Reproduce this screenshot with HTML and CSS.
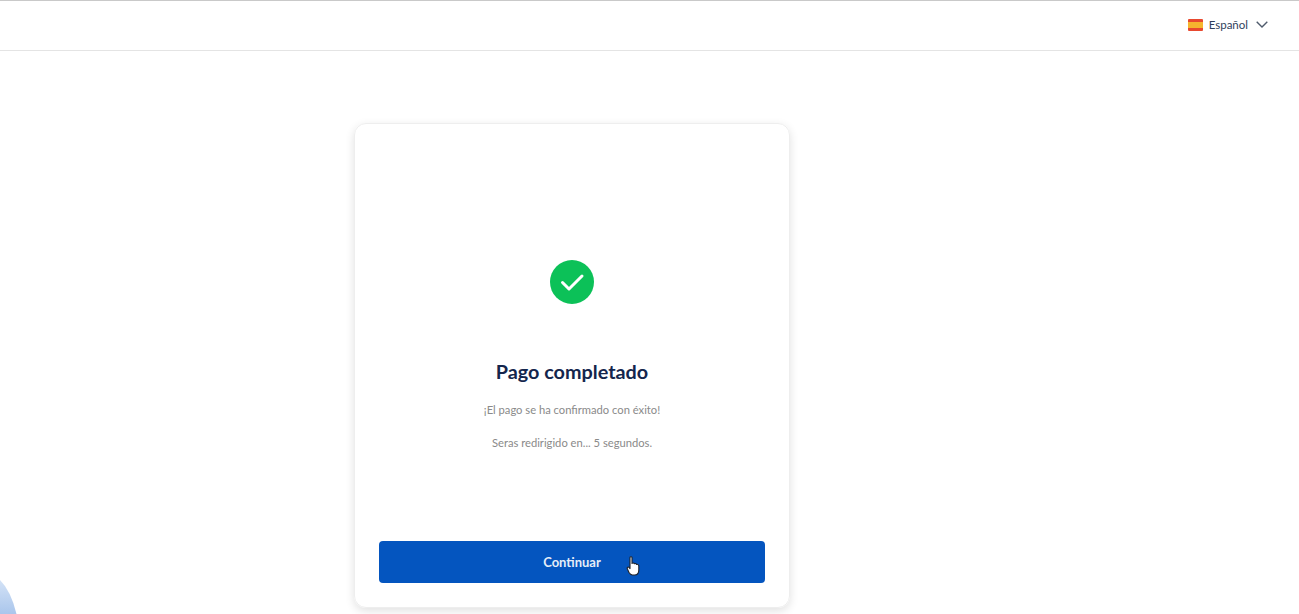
FILE: index.html
```html
<!DOCTYPE html>
<html lang="es">
<head>
    <meta charset="UTF-8">
    <title>Pago completado</title>
    <link rel="stylesheet" href="styles.css">
</head>
<body>
    <header class="topbar">
        <div class="lang">
            <svg class="flag" width="15" height="12" viewBox="0 0 15 12">
                <rect width="15" height="12" rx="1" fill="#e8492f"/>
                <rect y="3" width="15" height="6" fill="#f6b52e"/>
            </svg>
            <span>Español</span>
            <svg class="chevron" width="12" height="7" viewBox="0 0 12 7">
                <path d="M0.7 0.7 L6 6 L11.3 0.7" fill="none" stroke="#4f5b6c" stroke-width="1.4"/>
            </svg>
        </div>
    </header>

    <main class="content">
        <div class="card">
            <div class="status">
                <svg class="check" width="44" height="44" viewBox="0 0 44 44">
                    <circle cx="22" cy="22" r="22" fill="#0cc158"/>
                    <path d="M12.5 22.5 L19 29 L32 16" fill="none" stroke="#fff" stroke-width="3" stroke-linecap="round" stroke-linejoin="round"/>
                </svg>
                <h1>Pago completado</h1>
                <p>¡El pago se ha confirmado con éxito!</p>
                <p>Seras redirigido en... 5 segundos.</p>
            </div>
            <button type="button" class="button-primary">
                Continuar
                <svg class="hand" width="14" height="20" viewBox="0 0 14 20">
                    <path d="M4 1.6 C4 0.5 6 0.5 6 1.6 L6 7.4 C7 6.8 8 7 8.4 7.7 C9.3 7.3 10.2 7.6 10.6 8.4 C11.6 8.1 12.8 8.7 12.8 10 L12.8 14 C12.8 16.8 11.4 19 8.6 19 L6.4 19 C4.6 19 3.8 18 3 16.6 L1.2 12.6 C0.7 11.4 2.2 10.4 3.2 11.6 L4 12.6 Z" fill="#fff" stroke="#20232b" stroke-width="1.1" stroke-linejoin="round"/>
                </svg>
            </button>
        </div>
    </main>

    <svg class="blob" width="18" height="40" viewBox="0 0 18 40">
        <defs>
            <linearGradient id="blob-fill" x1="0" y1="0" x2="0" y2="1">
                <stop offset="0" stop-color="#d3e2f6"/>
                <stop offset="1" stop-color="#aac6ec"/>
            </linearGradient>
        </defs>
        <path d="M0 6 Q11 17 16.5 40 L0 40 Z" fill="url(#blob-fill)"/>
    </svg>
</body>
</html>
```

FILE: styles.css
```css
html, body {
    height: 100%;
}
body {
    margin: 0;
    font-family: "Lato", "Open Sans", Arial, sans-serif;
    background-color: #fff;
    overflow: hidden;
    position: relative;
}
.topbar {
    height: 47px;
    box-sizing: content-box;
    border-top: 1px solid #c9c9c9;
    border-bottom: 1px solid #e4e4e4;
    display: flex;
    justify-content: flex-end;
    align-items: center;
    padding: 0 31px 2px 0;
}
.lang {
    display: flex;
    align-items: center;
    font-size: 11.5px;
    color: #2f3f5c;
}
.flag {
    margin-right: 6px;
}
.chevron {
    margin-left: 8px;
}
.content {
    padding: 72px 0 0 354px;
}
.card {
    width: 436px;
    height: 485px;
    box-sizing: border-box;
    padding: 136px 24px 24px;
    border: 1px solid #eeeeee;
    border-radius: 12px;
    box-shadow: 0 3px 10px rgba(0,0,0,0.12);
    display: flex;
    flex-direction: column;
    justify-content: space-between;
}
.status {
    text-align: center;
}
.check {
    display: block;
    margin: 0 auto;
}
h1 {
    font-size: 19.8px;
    font-weight: 700;
    color: #14264d;
    margin: 55px 0 0;
    line-height: 24px;
}
.status p {
    font-size: 11.2px;
    color: #8a8a8a;
    margin: 0;
    line-height: 14px;
    margin-top: 19px;
}
.status h1 + p {
    margin-top: 20px;
}
.button-primary {
    position: relative;
    width: 386px;
    height: 42px;
    background-color: #0455bf;
    color: #e4edf8;
    border: none;
    border-radius: 4px;
    font-family: inherit;
    font-size: 13px;
    font-weight: 700;
    cursor: pointer;
}
.hand {
    position: absolute;
    left: 247px;
    top: 15px;
}
.blob {
    position: absolute;
    left: 0;
    bottom: 0;
}
```
